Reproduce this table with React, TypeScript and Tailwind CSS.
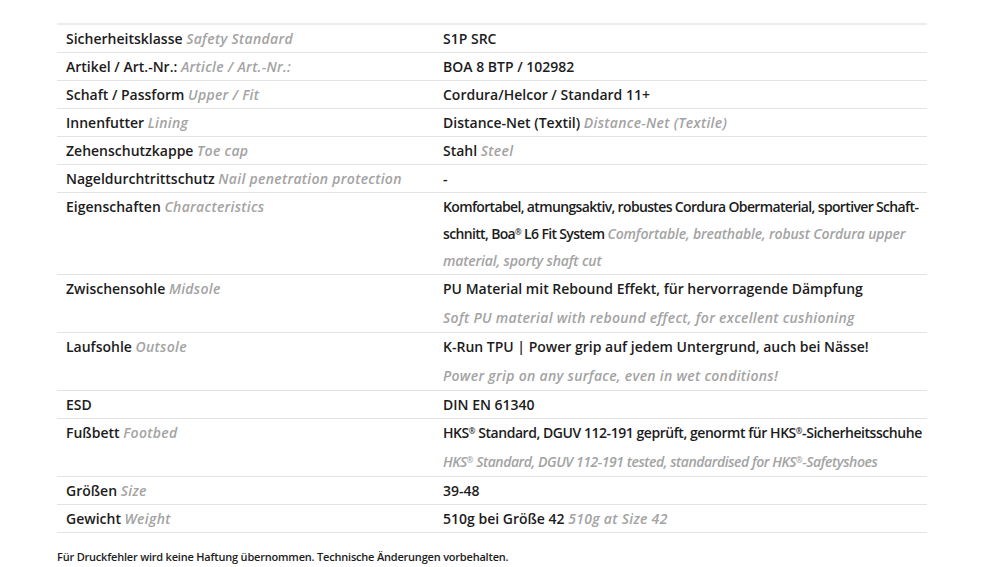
import React from "react";

type Row = {
	de: string;
	en?: string;
	value: React.ReactNode;
	lead?: string;
};

const Reg = () => <span className="relative -top-[4px] text-[8px] leading-none">®</span>;

const En = ({ children, tight }: { children: React.ReactNode; tight?: boolean }) => (
	<span className={tight ? "italic tracking-[-0.15px] text-[#a3a3a3]" : "italic tracking-[0.3px] text-[#a3a3a3]"}>
		{children}
	</span>
);

const rows: Row[] = [
	{ de: "Sicherheitsklasse", en: "Safety Standard", value: "S1P SRC" },
	{ de: "Artikel / Art.-Nr.:", en: "Article / Art.-Nr.:", value: "BOA 8 BTP / 102982" },
	{ de: "Schaft / Passform", en: "Upper / Fit", value: "Cordura/Helcor / Standard 11+" },
	{
		de: "Innenfutter",
		en: "Lining",
		value: (
			<>
				Distance-Net (Textil) <En>Distance-Net (Textile)</En>
			</>
		),
	},
	{
		de: "Zehenschutzkappe",
		en: "Toe cap",
		value: (
			<>
				Stahl <En>Steel</En>
			</>
		),
	},
	{ de: "Nageldurchtrittschutz", en: "Nail penetration protection", value: "-" },
	{
		de: "Eigenschaften",
		en: "Characteristics",
		lead: "leading-[27px] tracking-[-0.65px]",
		value: (
			<>
				Komfortabel, atmungsaktiv, robustes Cordura Obermaterial, sportiver Schaft-
				<br />
				schnitt, Boa<Reg /> L6 Fit System <En tight>Comfortable, breathable, robust Cordura upper</En>
				<br />
				<En tight>material, sporty shaft cut</En>
			</>
		),
	},
	{
		de: "Zwischensohle",
		en: "Midsole",
		lead: "leading-[28.5px]",
		value: (
			<>
				PU Material mit Rebound Effekt, für hervorragende Dämpfung
				<br />
				<En>Soft PU material with rebound effect, for excellent cushioning</En>
			</>
		),
	},
	{
		de: "Laufsohle",
		en: "Outsole",
		lead: "leading-[28.5px]",
		value: (
			<>
				K-Run TPU | Power grip auf jedem Untergrund, auch bei Nässe!
				<br />
				<En>Power grip on any surface, even in wet conditions!</En>
			</>
		),
	},
	{ de: "ESD", value: "DIN EN 61340" },
	{
		de: "Fußbett",
		en: "Footbed",
		lead: "leading-[28.5px] tracking-[-0.45px]",
		value: (
			<>
				HKS<Reg /> Standard, DGUV 112-191 geprüft, genormt für HKS<Reg />-Sicherheitsschuhe
				<br />
				<span className="italic text-[#a3a3a3]">
					HKS<Reg /> Standard, DGUV 112-191 tested, standardised for HKS<Reg />-Safetyshoes
				</span>
			</>
		),
	},
	{ de: "Größen", en: "Size", value: "39-48" },
	{
		de: "Gewicht",
		en: "Weight",
		value: (
			<>
				510g bei Größe 42 <En>510g at Size 42</En>
			</>
		),
	},
];

export default function App() {
	return (
		<div className="min-h-screen bg-white text-[#1c1c1c] font-['Open_Sans',sans-serif] font-semibold">
			<div className="ml-[57px] w-[870px] pt-[23px]">
				<div className="border-t-2 border-[#ececec]">
					{rows.map((r) => (
						<div key={r.de} className="grid grid-cols-[378px_1fr] border-b border-[#e3e3e3] text-[14px]">
							<div className="pl-[9px] leading-[27px]">
								{r.de} {r.en && <En>{r.en}</En>}
							</div>
							<div className={`whitespace-nowrap pl-[8px] ${r.lead ?? "leading-[27px]"}`}>{r.value}</div>
						</div>
					))}
				</div>
				<p className="mt-[16px] text-[11px] leading-[16px] tracking-[-0.2px]">
					Für Druckfehler wird keine Haftung übernommen. Technische Änderungen vorbehalten.
				</p>
			</div>
		</div>
	);
}
